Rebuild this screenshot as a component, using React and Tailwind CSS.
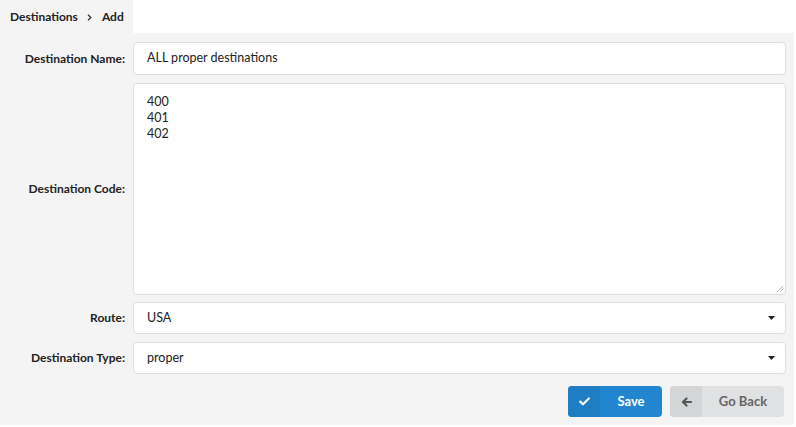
import React from "react";

function Caret() {
  return (
    <svg width="7" height="4" viewBox="0 0 7 4" className="shrink-0">
      <path d="M0 0 L7 0 L3.5 4 Z" fill="#222" />
    </svg>
  );
}

function Label({ children }) {
  return (
    <div className="w-[125px] shrink-0 text-right text-[12px] font-bold text-[#222] pr-0">
      {children}
    </div>
  );
}

export default function App() {
  return (
    <div className="w-[796px] h-[427px] bg-white text-[#222]" style={{ fontFamily: "Lato, 'Open Sans', sans-serif" }}>
      <div className="flex">
        <div className="w-[133px] h-[33px] bg-[#f4f4f4] flex items-center pl-[10px] text-[12px] font-bold">
          <span>Destinations</span>
          <svg className="ml-[9px] mr-[10px] mt-[1px]" width="5" height="7" viewBox="0 0 5 7">
            <path d="M1 0.8 L3.8 3.5 L1 6.2" stroke="#333" strokeWidth="1.3" fill="none" />
          </svg>
          <span>Add</span>
        </div>
      </div>
      <div className="w-[794px] h-[392px] bg-[#f4f4f4] pt-[9px] pr-[8px] flex flex-col">
        <div className="flex items-center gap-[8px] h-[33px]">
          <Label>Destination Name:</Label>
          <div className="flex-1 h-full bg-white border border-[#dedede] rounded-[4px] flex items-center px-[13px] text-[12.5px] text-[#222]">
            ALL proper destinations
          </div>
        </div>
        <div className="flex items-center gap-[8px] h-[212px] mt-[8px]">
          <Label>Destination Code:</Label>
          <div className="relative flex-1 h-full bg-white border border-[#dedede] rounded-[4px] px-[13px] pt-[10px] text-[12.5px] leading-[16px] text-[#222]">
            <div>400</div>
            <div>401</div>
            <div>402</div>
            <svg className="absolute right-[1px] bottom-[1px]" width="8" height="8" viewBox="0 0 8 8">
              <path d="M7 1 L1 7 M7 4 L4 7" stroke="#b5b5b5" strokeWidth="1" />
            </svg>
          </div>
        </div>
        <div className="flex items-center gap-[8px] h-[32px] mt-[7px]">
          <Label>Route:</Label>
          <div className="flex-1 h-full bg-white border border-[#dedede] rounded-[4px] flex items-center justify-between pl-[13px] pr-[10px] text-[12.5px] text-[#222]">
            <span>USA</span>
            <Caret />
          </div>
        </div>
        <div className="flex items-center gap-[8px] h-[32px] mt-[8px]">
          <Label>Destination Type:</Label>
          <div className="flex-1 h-full bg-white border border-[#dedede] rounded-[4px] flex items-center justify-between pl-[13px] pr-[10px] text-[12.5px] text-[#222]">
            <span>proper</span>
            <Caret />
          </div>
        </div>
        <div className="flex justify-end gap-[8px] mt-[12px] pr-[2px]">
          <div className="w-[94px] h-[31px] bg-[#2185d0] rounded-[4px] flex overflow-hidden text-white text-[13px] font-bold">
            <div className="w-[32px] h-full bg-[#1f7dc4] flex items-center justify-center">
              <svg width="11" height="9" viewBox="0 0 11 9">
                <path d="M1.2 4.6 L4 7.3 L9.8 1.5" stroke="white" strokeWidth="2.2" fill="none" strokeLinecap="round" strokeLinejoin="round" />
              </svg>
            </div>
            <div className="flex-1 flex items-center justify-center">Save</div>
          </div>
          <div className="w-[114px] h-[31px] bg-[#e0e1e2] rounded-[4px] flex overflow-hidden text-[#666] text-[13px] font-bold">
            <div className="w-[32px] h-full bg-[#d4d5d6] flex items-center justify-center">
              <svg width="11" height="10" viewBox="0 0 11 10">
                <path d="M10 5 L2.5 5 M5.5 1.5 L2 5 L5.5 8.5" stroke="#555" strokeWidth="2.2" fill="none" strokeLinecap="round" strokeLinejoin="round" />
              </svg>
            </div>
            <div className="flex-1 flex items-center justify-center">Go Back</div>
          </div>
        </div>
      </div>
    </div>
  );
}
